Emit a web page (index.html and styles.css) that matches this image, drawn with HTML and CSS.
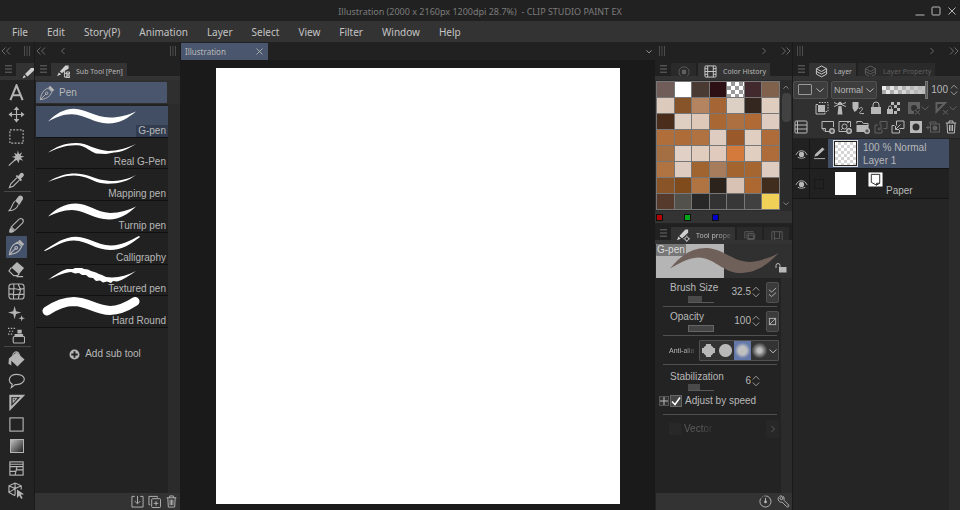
FILE: index.html
```
<!DOCTYPE html>
<html lang="en">
<head>
<meta charset="utf-8">
<title>Illustration - CLIP STUDIO PAINT EX</title>
<link rel="stylesheet" href="styles.css">
</head>
<body>
<svg class="sprite" aria-hidden="true">
  <symbol id="dbl-left" viewBox="0 0 10 8"><path d="M4.500 .5 1 4l3.500 3.500M9 .5 5.500 4 9 7.500"/></symbol>
  <symbol id="dbl-right" viewBox="0 0 10 8"><path d="M1 .5 4.500 4 1 7.500M5.500 .5 9 4 5.500 7.500"/></symbol>
  <symbol id="left" viewBox="0 0 6 8"><path d="M4.500 1 1.500 4l3 3"/></symbol>
  <symbol id="right" viewBox="0 0 6 8"><path d="M1.500 1l3 3-3 3"/></symbol>
  <symbol id="down" viewBox="0 0 8 6"><path d="M.5 1.500 4 4.800 7.500 1.500"/></symbol>
  <symbol id="up" viewBox="0 0 8 6"><path d="M.5 4.500 4 1.200 7.500 4.500"/></symbol>
  <symbol id="spin" viewBox="0 0 8 12"><path d="M.8 4.500 4 1.200 7.200 4.500M.8 7.500 4 10.800 7.200 7.500"/></symbol>
  <symbol id="grip" viewBox="0 0 6 10"><path d="M.5 0v10M3 0v10M5.500 0v10"/></symbol>
  <symbol id="burger" viewBox="0 0 7 8"><path d="M0 .8h7M0 4h7M0 7.200h7"/></symbol>
  <symbol id="close" viewBox="0 0 8 8"><path d="M.6 .6l6.800 6.800M7.400 .6.6 7.400"/></symbol>
  <symbol id="nib" viewBox="0 0 18 18"><path d="M1.500 16.500C2 12 3.500 8.500 6 6l4-2.500 4.500 4.500L12 12c-2.500 2.500-6 4-10.500 4.500zM2 16l6-6"/><circle cx="8.700" cy="9.300" r="1.400"/><path class="fill" d="M10.500 3 12.500 .8 17.200 5.500 15 7.500z"/></symbol>
  <symbol id="plus-round" viewBox="0 0 12 12"><path class="fill" fill-rule="evenodd" d="M6 .5a5.500 5.500 0 1 0 0 11 5.500 5.500 0 0 0 0-11zM5 2.500h2V5h2.500v2H7v2.500H5V7H2.500V5H5z"/></symbol>
  <symbol id="trash" viewBox="0 0 12 14"><path d="M.8 3h10.400M4 3V1h4v2M2 3l.6 10h6.800L10 3M4.500 5v6M6 5v6M7.500 5v6"/></symbol>
  <symbol id="layers" viewBox="0 0 14 14"><path d="M7 1l5.500 3L7 7 1.500 4zM1.500 6.800 7 9.800l5.500-3M1.500 9.800l5.500 3 5.500-3M1.500 4v5.800M12.500 4v5.800"/></symbol>
  <symbol id="eye" viewBox="0 0 14 10"><path d="M1 6c2.500-6 9.500-6 12 0"/><circle class="fill" cx="7" cy="5.500" r="2.800"/><path d="M3 8.500c2 1.300 6 1.300 8 0"/></symbol>
</svg>

<header class="titlebar">
  <h1>Illustration (2000 x 2160px 1200dpi 28.7%)&nbsp; - CLIP STUDIO PAINT EX</h1>
  <div class="window-buttons">
    <button aria-label="Minimize"><svg viewBox="0 0 10 10"><path d="M.5 9h9"/></svg></button>
    <button aria-label="Maximize"><svg viewBox="0 0 10 10"><rect x="1" y="1" width="8" height="8" rx="1"/></svg></button>
    <button aria-label="Close"><svg viewBox="0 0 10 10"><path d="M1.500 1.500l7 7M8.500 1.500l-7 7"/></svg></button>
  </div>
</header>

<nav class="menubar">
  <button>File</button><button>Edit</button><button>Story(P)</button><button>Animation</button><button>Layer</button><button>Select</button><button>View</button><button>Filter</button><button>Window</button><button>Help</button>
</nav>

<div class="workspace">
  <aside class="dock tool-dock">
    <div class="strip"><svg class="ic w10"><use href="#dbl-left"/></svg><svg class="ic grip push"><use href="#grip"/></svg></div>
    <div class="tabs"><svg class="ic burger"><use href="#burger"/></svg><span class="tab active clip"><svg class="ic lit" viewBox="0 0 12 12"><path class="fill" d="M.5 11.500 2 8l2 2zM3 7l6-6h3v2.500L5.500 9.500z"/></svg></span></div>
    <div class="tools">
      <button aria-label="Text"><svg viewBox="0 0 18 18"><path class="thick" d="M2.500 17 9 1.500 15.500 17M4.500 12h9"/></svg></button>
      <button aria-label="Move"><svg viewBox="0 0 18 18"><path d="M9 3v12M3 9h12"/><path class="fill" d="M9 .5l3 3.700H6zM9 17.500l3-3.700H6zM.5 9l3.700-3v6zM17.500 9l-3.700-3v6z"/></svg></button>
      <button aria-label="Marquee"><svg viewBox="0 0 18 18"><rect x="2" y="2" width="14" height="14" stroke-dasharray="2 1.500"/></svg></button>
      <button aria-label="Auto select"><svg viewBox="0 0 18 18"><path d="M.8 16.500 9 9"/><path class="fill" d="M10.500 .5l1.200 4 3.300-2-1.700 3.500 4.200 1-4 1.300 2.500 3.200-3.700-1.500L11 14l-1.500-3.500L6 12l1.500-3.500L4 7.200l4-.9L6.500 2.800l3 1.700z"/></svg></button>
      <button aria-label="Eyedropper"><svg viewBox="0 0 18 18"><path d="M9.500 6 3 12.500l-1.500 4 4-1.500L12 8.500"/><path class="fill" d="M8 4.200l1.500-1 1.300 1L13 1.500c2-2 5 .8 3.300 3L13.800 7l1 1.500-1.300 1.300z"/></svg></button>
      <hr>
      <button aria-label="Brush"><svg viewBox="0 0 18 18"><path d="M7.500 6.500C4 9 5.500 12 1.200 16.500c4 0 8-.5 9.800-6.500"/><path class="fill" d="M7.500 6l3.500-4.500c2-2.300 6 0 4.700 3L12 10.500z"/></svg></button>
      <button aria-label="Marker"><svg viewBox="0 0 18 18"><path d="M3 11 11.500 2.500c3-2.300 6 .8 4 3.700L7 14.500M3.500 10.500l4 4"/><path class="fill" d="M3 11l4 4c-2 2-5 2-5.500 1.500S1 13 3 11z"/></svg></button>
      <button aria-label="Pen" class="selected"><svg><use href="#nib"/></svg></button>
      <button aria-label="Eraser"><svg viewBox="0 0 18 18"><path class="fill" d="M9.500 1 17 7.500 11.500 14 3.500 7z"/><path d="M3.500 7 1 10.500l5 5h4l2-2M9 16.500h7"/></svg></button>
      <button aria-label="Mesh"><svg viewBox="0 0 18 18"><rect x="1" y="1" width="16" height="16" rx="3"/><path d="M6 1c1 5-1 10 0 16M11 1c0 3 3 4 2 8-1 3-2 5-2 8M1 6c5 1 6-1 10 1l6-1M1 12c4-1 6 1 9 0l7 0"/></svg></button>
      <button aria-label="Decoration"><svg viewBox="0 0 18 18"><path class="fill" d="M7 1l1.500 5.500L14 8 8.500 9.500 7 15 5.500 9.500 0 8l5.500-1.500zM14.500 10.500l.8 2.700 2.700.8-2.700.8-.8 2.700-.8-2.700-2.700-.8 2.700-.8z"/></svg></button>
      <button aria-label="Airbrush"><svg viewBox="0 0 18 18"><path class="fill" d="M10 3h4.500v4H10zM7 7.500h9v2H7z"/><rect x="5.500" y="10" width="12" height="7" rx="1.500"/><path stroke-dasharray="1.500 1.500" d="M0 1.500h8M1 4.500h6M0 7.500h5"/></svg></button>
      <hr>
      <button aria-label="Fill"><svg viewBox="0 0 18 18"><path class="fill" d="M9 2.500l8.500 7.500-7.500 7.500L3.500 11.500v5L.5 14.500 1 9z"/><path d="M5 6.500C5 3 8 .5 11 3l1.500 3"/></svg></button>
      <button aria-label="Balloon"><svg viewBox="0 0 18 18"><path d="M4.500 13C-1.500 9 2 2.500 9 2.500S19 7 16 10.500c-2 2.500-5 3-8.500 2.800L3.500 16.500z"/></svg></button>
      <button aria-label="Ruler"><svg viewBox="0 0 18 18"><path class="thick" d="M2.500 2v13.500L15.500 2z"/><path d="M5.500 4.500v4l3.500-4z"/></svg></button>
      <button aria-label="Figure"><svg viewBox="0 0 18 18"><rect x="2" y="2" width="14" height="14"/></svg></button>
      <button aria-label="Gradient"><span class="gradient-icon"></span></button>
      <button aria-label="Frame"><svg viewBox="0 0 18 18"><rect x="2" y="2" width="14" height="14"/><path d="M2 7h14M2 4.500h14M9.500 7l-2 9M8.500 12H2M9 10.500h7"/></svg></button>
      <button aria-label="Operation"><svg viewBox="0 0 18 18"><path d="M7.500 1 14 4v4M7.500 1 1 4v7l6.500 3.500M1 4l6.500 3L14 4M7.500 7v7M1 11l6.500-4M7.500 1v6"/><path class="fill" d="M9.500 8l7.500 5-3.500.5 2 3.500-1.500 1-2-3.500-2.500 2.500z"/></svg></button>
    </div>
  </aside>

  <aside class="dock sub-dock">
    <div class="strip"><svg class="ic w10"><use href="#dbl-left"/></svg><svg class="ic w6 lead"><use href="#left"/></svg><svg class="ic grip push"><use href="#grip"/></svg></div>
    <div class="tabs"><svg class="ic burger"><use href="#burger"/></svg><span class="tab active"><svg class="ic lit big" viewBox="0 0 14 14"><path class="fill" d="M0 12l2-4 2.500 2zM3 7l6-6.500h3.500V4L8 6.500 5.500 9z"/><path d="M8 5v8h5M8 9h5M10 7.500h3.500v2.500H10zM10 11.500h3.500v2H10z"/></svg>Sub Tool [Pen]</span></div>
    <div class="sub-body">
      <div class="group-row"><button class="group"><svg><use href="#nib"/></svg>Pen</button></div>
      <div class="brush-list">
        <button class="brush selected"><svg viewBox="0 0 132 30"><path d="M12 15.500C20 8 27 3 38 2.800C50 3 58 11 74 11.500C84 11.500 92 9 100 5.500C92 12 84 17.500 72 17.500C58 17.500 50 9 36 8.300C27 8 20 11.500 12 15.500z"/></svg><span>G-pen</span></button>
        <button class="brush"><svg viewBox="0 0 132 30"><path d="M12 14.500C20 9 28 5 40 5 52 5 58 12 72 13 82 13 91 10 100 6 92 11 86 14 78 14.500L70 16 60 15.500C54 13 50 9 44 7.500 32 6 22 10 12 14.500z"/></svg><span>Real G-Pen</span></button>
        <button class="brush"><svg viewBox="0 0 132 30"><path d="M12 13C22 7 30 4.500 40 4.600 54 5 58 11 74 12 84 12 92 10 100 6 92 12 84 14.700 72 14.700 58 15 54 7 38 6.500 28 6.500 20 10 12 13z"/></svg><span>Mapping pen</span></button>
        <button class="brush"><svg viewBox="0 0 132 30"><path d="M12 15.500C20 8 28 2.500 40 2.500 53 3 60 11 74 12 84 12 93 9 100 5.500 92 13 84 18.500 73 18.500 58 18.500 48 9 36 9 27 9 20 12 12 15.500z"/></svg><span>Turnip pen</span></button>
        <button class="brush"><svg viewBox="0 0 132 30"><path d="M8 17.500C20 10 28 4 40 3.800 53 4 60 12 75 12.500 86 12.500 95 7 103 3L104 4C95 11 86 17 74 17 60 17 52 8 38 7.500 27 7.500 18 14 9 18z"/></svg><span>Calligraphy</span></button>
        <button class="brush"><svg viewBox="0 0 132 30"><path d="M12 15C18 10 25 6 31 4L37 4 39 3 46 3 48 4 52 4.500 55 6 60 7.500 63 9 66 10 70 12 76 12.500C84 12.500 92 10 100 6 93 11 87 15 81 16.500L77 16 75 18 71 16.500 67 17.500 64 15.500 60 16 57 13 53 12.500 50 10 46 10 43 8 39 8.500 35 7C26 8 18 12 12 15z"/></svg><span>Textured pen</span></button>
        <button class="brush"><svg viewBox="0 0 132 30"><path class="round" d="M11 15C20 9 30 5.500 38 5.500 52 6 60 14 74 14.500 84 14.500 92 10 99 5.500"/></svg><span>Hard Round</span></button>
      </div>
      <button class="add"><svg><use href="#plus-round"/></svg>Add sub tool</button>
    </div>
    <footer class="foot">
      <button aria-label="Import"><svg viewBox="0 0 14 14"><path d="M4 1.500H1v11.500h12V1.500h-3M7 1v8M4 6.500l3 3 3-3"/></svg></button>
      <button aria-label="Duplicate"><svg viewBox="0 0 14 14"><rect x="4" y="4" width="9.500" height="9.500" rx="1"/><path d="M2.500 10.500H1v-9h9V3M8.700 6.500v5M6.200 9h5"/></svg></button>
      <button aria-label="Delete"><svg><use href="#trash"/></svg></button>
    </footer>
  </aside>

  <main class="document">
    <div class="doc-tabs"><button class="doc-tab">Illustration<svg><use href="#close"/></svg></button><svg class="ic doc-more"><use href="#down"/></svg></div>
    <div class="stage"><div class="paper"></div></div>
  </main>

  <aside class="dock prop-dock">
    <div class="strip"><svg class="ic grip"><use href="#grip"/></svg><svg class="ic w6 push"><use href="#right"/></svg><svg class="ic w10 wide-gap"><use href="#dbl-right"/></svg></div>
    <div class="tabs"><svg class="ic burger"><use href="#burger"/></svg><span class="tab dim icon-only"><svg class="ic" viewBox="0 0 14 14"><circle cx="7" cy="7" r="6"/><rect class="fill" x="4.500" y="4.500" width="5" height="5" rx="1"/></svg></span><span class="tab active"><svg class="ic lit big" viewBox="0 0 14 14"><rect x="1" y="1" width="12" height="12" rx="1"/><path d="M4 1v12M10 1v12M4 7h6M1 4h3M1 7h3M1 10h3M10 4h3M10 7h3M10 10h3"/></svg>Color History</span></div>
    <div class="history">
      <div class="swatches" id="swatches"></div>
      <div class="scroll"><svg class="ic"><use href="#up"/></svg><i></i><svg class="ic"><use href="#down"/></svg></div>
    </div>
    <div class="marks"><i class="red"></i><i class="green"></i><i class="blue"></i></div>

    <div class="tabs prop-tabs"><svg class="ic burger"><use href="#burger"/></svg><span class="tab active"><svg class="ic lit big" viewBox="0 0 14 14"><path class="fill" d="M0 12l1.500-4 2.500 2.500zM2.500 7.500 9 .5h3V4L5.500 10z"/><circle cx="10.500" cy="10.500" r="2"/><path d="M10.500 7v1M10.500 13v1M7 10.500h1M13 10.500h1"/></svg><span class="fade">Tool prope</span></span><span class="tab dim icon-only"><svg class="ic" viewBox="0 0 14 12"><rect x="3.500" y="3" width="9" height="7" rx="1"/><rect x="5" y="5" width="6" height="4"/><path d="M1 9V1h10"/></svg></span><span class="tab dim icon-only"><svg class="ic" viewBox="0 0 14 12"><path d="M1 11V1h12v10M4 1v10M10 1v8H4"/></svg></span></div>
    <div class="preview"><span>G-pen</span>
      <svg class="wave" viewBox="0 0 135 34" preserveAspectRatio="none"><path d="M14 24.500C24 12 35 4 50 4 68 5 76 18 94 18 105 17 114 13 122 9 110 21 100 29 82 29 66 28 58 14 42 13.500 31 14 22 20 14 24.500z"/></svg>
      <svg class="lock" viewBox="0 0 12 11"><rect class="fill" x="4" y="5" width="7.500" height="5.500"/><path d="M5 5V3.500a2 2 0 0 0-4 0V6"/></svg>
    </div>
    <div class="props">
      <div class="prop"><label for="size">Brush Size</label><input id="size" class="range f14" type="range"><input class="num" aria-label="Brush size value" value="32.5"><svg class="ic spin"><use href="#spin"/></svg><button class="dyn" aria-label="Size dynamics"><svg viewBox="0 0 10 12"><path d="M1 3l3 2.500L9 1M1 8l3 2.500L9 6"/></svg></button></div>
      <div class="prop"><label for="opacity">Opacity</label><input id="opacity" class="range f26" type="range"><input class="num" aria-label="Opacity value" value="100"><svg class="ic spin"><use href="#spin"/></svg><button class="dyn" aria-label="Opacity dynamics"><svg viewBox="0 0 10 12"><rect x="1.500" y="2.500" width="7" height="7"/><path d="M1.500 9.500l7-7"/></svg></button></div>
      <div class="prop anti"><span class="fade narrow">Anti-alia</span><div class="aa"><input type="radio" name="aa" aria-label="None" class="aa0"><input type="radio" name="aa" aria-label="Weak" class="aa1"><input type="radio" name="aa" aria-label="Middle" class="aa2" checked><input type="radio" name="aa" aria-label="Strong" class="aa3"><svg class="ic"><use href="#down"/></svg></div></div>
      <div class="prop stab"><label for="stab">Stabilization</label><input id="stab" class="range f12" type="range"><input class="num" aria-label="Stabilization value" value="6"><svg class="ic spin"><use href="#spin"/></svg><div class="speed"><button class="expand" aria-label="Expand"><svg viewBox="0 0 8 8"><path d="M4 0v8M0 4h8"/></svg></button><label><input type="checkbox" checked><svg viewBox="0 0 10 10"><path d="M1 5.500l3 3L9 1.500"/></svg>Adjust by speed</label></div></div>
      <div class="vector"><label><input type="checkbox" disabled><span class="fade">Vector</span></label><button class="more" aria-label="Vector magnet options" disabled><svg class="ic w6"><use href="#right"/></svg></button></div>
    </div>
    <footer class="foot">
      <button aria-label="Reset"><svg viewBox="0 0 14 14"><path d="M7 1a6 6 0 1 1-5.500 3.500"/><path stroke-dasharray="1 1.500" d="M1.500 4.500A6 6 0 0 1 7 1"/><path d="M7 3v4"/><circle class="fill" cx="7" cy="7.500" r="1.500"/></svg></button>
      <button aria-label="Settings"><svg viewBox="0 0 14 14"><path d="M5.500 1.200C3 .2.800 2.500 1.300 5l.7 1.500c1 1.200 2 1.500 3.500 1.200l5 5c1.300 1 3-.8 2-2l-5-5C8 4 7.500 2 6.500 1.500L6 4.500 4.500 5 3 4z"/><path d="M10.800 11h.4"/></svg></button>
    </footer>
  </aside>

  <aside class="dock layer-dock">
    <div class="strip"><svg class="ic grip"><use href="#grip"/></svg><svg class="ic w6 push"><use href="#right"/></svg><svg class="ic w10 wide-gap"><use href="#dbl-right"/></svg></div>
    <div class="tabs"><svg class="ic burger"><use href="#burger"/></svg><span class="tab active"><svg class="ic lit big"><use href="#layers"/></svg>Layer</span><span class="tab dim"><svg class="ic big"><use href="#layers"/></svg>Layer Property</span></div>
    <div class="layer-tools">
      <div class="blend">
        <button class="box" aria-label="Palette color"><i></i><svg class="ic caret"><use href="#down"/></svg></button>
        <div class="box mode"><select aria-label="Blend mode"><option>Normal</option></select><svg class="ic caret"><use href="#down"/></svg></div>
        <input class="alpha" type="range" aria-label="Layer opacity" value="100">
        <input class="num" aria-label="Layer opacity value" value="100"><svg class="ic spin"><use href="#spin"/></svg>
      </div>
      <div class="icons first">
        <button aria-label="Clip to layer below"><svg viewBox="0 0 14 14"><rect class="fill" x="3" y="4" width="7" height="7"/><path d="M3 3.500H1V13h9v-1.500"/><path stroke-dasharray="1.500 1.200" d="M4 1.500h9v9H10.500"/></svg></button>
        <button aria-label="Reference layer"><svg viewBox="0 0 14 14"><path class="fill" d="M5.500 5h3l1 8.500h-5zM5 2l2-1.500L9 2v2H5z"/><path d="M1 1.500l4 1.800M1 5.500l4-1.500M13 1.500 9 3.300M13 5.500 9 4"/></svg></button>
        <button aria-label="Draft layer"><svg viewBox="0 0 14 14"><path class="fill" d="M1.500 1h6v6L5.500 9.500 3.500 11 1.500 7z"/><path d="M8 8c2-3 5-1 2.500 1.500-2 2-4 3.500 2.500 3"/></svg></button>
        <button aria-label="Lock layer"><svg viewBox="0 0 14 14"><rect class="fill" x="2" y="6" width="10" height="7"/><path d="M4 6V4a3 3 0 0 1 6 0v2"/></svg></button>
        <button aria-label="Lock transparent pixels"><svg viewBox="0 0 14 14"><path class="fill" d="M4 1h3v3H4zM10 1h3v3h-3zM7 4h3v3H7zM10 7h3v3h-3zM7 10h3v3H7zM0 8h6v5H0z"/><path d="M1.500 8V6.500a1.500 1.500 0 0 1 3 0V8"/></svg></button>
        <button aria-label="Mask" class="off caretted"><svg viewBox="0 0 14 14"><path class="fill" fill-rule="evenodd" d="M1 1h12v7h-4l-2 2v3H1zM7 4a3 3 0 1 0 0 6 3 3 0 0 0 0-6z"/><path d="M8 9l5 4.500M13 9l-5 4.500"/></svg><svg class="caret"><use href="#down"/></svg></button>
        <button aria-label="Ruler range" class="off caretted"><svg viewBox="0 0 14 14"><path class="thick" d="M1.500 2v8.500L10 2z"/><path d="M8 9l5 4.500M13 9l-5 4.500"/></svg><svg class="caret"><use href="#down"/></svg></button>
      </div>
      <div class="icons second">
        <button aria-label="Panel layout"><svg viewBox="0 0 14 14"><rect x="1" y="1" width="12" height="12" rx="1"/><path d="M1 5h12M1 9h12M3.500 1v12"/></svg></button>
        <button aria-label="New raster layer"><svg viewBox="0 0 14 14"><path d="M8 11.500H4L1 8.500V1.500h11.500V7M4.500 11.500V8.500H1"/><circle class="fill" cx="11" cy="11" r="3"/><path class="cut" d="M11 9.300v3.400M9.300 11h3.400"/></svg></button>
        <button aria-label="New vector layer"><svg viewBox="0 0 14 14"><path d="M8 11.500H1V1.500h11.500V7"/><circle cx="6.500" cy="6.500" r="2.500"/><path d="M3 10l2-2M9 3l2-1"/><circle class="fill" cx="11" cy="11" r="3"/><path class="cut" d="M11 9.300v3.400M9.300 11h3.400"/></svg></button>
        <button aria-label="New folder"><svg viewBox="0 0 14 14"><path d="M.8 3.500V1.500h5l1.500 2H12V6"/><path class="fill" d="M.5 5h12v5L9 12H.5z"/><circle class="fill" cx="11" cy="11" r="3"/><path class="cut" d="M11 9.300v3.400M9.300 11h3.400"/></svg></button>
        <button aria-label="Transfer down" class="off"><svg viewBox="0 0 14 14"><path d="M6 1.500h7v7H9.500M6 1.500v3M4 5H1v8h7V9.500M7 4v5H4M5.500 7.500 4 9l1.500 1.500"/></svg></button>
        <button aria-label="Merge down"><svg viewBox="0 0 14 14"><path d="M5.500 5.500v-4.500h7.500v7.500H8.500M3.500 5.500H1V13h7.500v-3M9.500 4.500 4.500 9.500M4.500 6v3.500H8"/></svg></button>
        <button aria-label="Create mask"><svg viewBox="0 0 14 14"><path class="fill" fill-rule="evenodd" d="M1 1h12v12H1zM7 3.500a3.500 3.500 0 1 0 0 7 3.500 3.500 0 0 0 0-7z"/></svg></button>
        <button aria-label="Apply mask" class="off"><svg viewBox="0 0 14 14"><path d="M4 4V2h6v2M0 7.500h4M2 5.500v4"/><rect x="4.500" y="4" width="9" height="8"/><circle class="fill" cx="9" cy="8" r="2.500"/></svg></button>
        <button aria-label="Delete layer"><svg><use href="#trash"/></svg></button>
      </div>
    </div>
    <div class="layers">
      <div class="layer"><button class="eye" aria-label="Toggle Layer 1"><svg><use href="#eye"/></svg></button><span class="state"><svg viewBox="0 0 14 14"><path class="fill" d="M1.500 10.500l1-3L10 .5l2.500 2L5 9.500z"/><path d="M1 12.500h12"/></svg></span><div class="info selected"><i class="thumb checker"></i><p>100 % Normal<br>Layer 1</p></div></div>
      <div class="layer"><button class="eye" aria-label="Toggle Paper"><svg><use href="#eye"/></svg></button><span class="state"><i></i></span><div class="info"><i class="thumb"></i><svg class="sheet" viewBox="0 0 16 16"><rect width="16" height="16"/><path d="M3.500 2.500h9v9.500H9v2L3.500 11zM9 14l3.500-2"/></svg><p class="name">Paper</p></div></div>
    </div>
  </aside>
</div>
<script src="script.js"></script>
</body>
</html>
```
FILE: styles.css
```
* { box-sizing: border-box; }
body { margin: 0; height: 100vh; min-height: 510px; display: flex; flex-direction: column; background: #1b1b1b; color: #b8b8b8; font: 10px/12px "Liberation Sans", sans-serif; overflow: hidden; }
button, input, select { font: inherit; color: inherit; background: none; border: 0; padding: 0; margin: 0; }
button { display: flex; align-items: center; justify-content: center; }
svg { fill: none; stroke: currentColor; stroke-width: 1; flex: none; display: block; }
.sprite { position: absolute; width: 0; height: 0; }
.fill { fill: currentColor; stroke: none; }
.thick { stroke-width: 2; }
.cut { stroke: #333; }
i { display: block; }
p { margin: 0; }

.titlebar { height: 21px; background: #212121; display: grid; grid-template-columns: 1fr auto 1fr; align-items: center; }
.titlebar h1 { grid-column: 2; margin: 2px 0 0; font: 9px/12px "Noto Sans", sans-serif; color: #7c7c7c; white-space: nowrap; }
.window-buttons { display: flex; gap: 6px; justify-content: flex-end; padding-right: 3px; }
.window-buttons svg { width: 10px; height: 10px; }
.menubar { height: 21px; background: #333; display: flex; align-items: center; gap: 18px; padding-left: 12px; font: 10px/14px "Noto Sans", sans-serif; color: #c4c4c4; }
.menubar { gap: 19px; }

.workspace { flex: 1; min-height: 0; display: flex; }
.dock { flex: none; display: flex; flex-direction: column; background: #232323; border-right: 1px solid #1a1a1a; }
.tool-dock { width: 35px; }
.sub-dock { width: 146px; }
.prop-dock { width: 138px; }
.layer-dock { width: 167px; border-right: 0; }
.document { flex: 1; min-width: 0; display: flex; flex-direction: column; }

.strip { height: 18px; flex: none; display: flex; align-items: center; padding: 0 4px 0 1px; color: #6a6a6a; background: #212121; }
.ic { width: 8px; height: 6px; }
.w10 { width: 10px; height: 8px; }
.w6 { width: 6px; height: 8px; }
.lead { margin-left: 14px; }
.grip { width: 6px; height: 10px; color: #4c4c4c; }
.push { margin-left: auto; }
.wide-gap { margin-left: 14px; }
.prop-dock .strip, .layer-dock .strip { padding: 0 1px 0 4px; }

.tabs { height: 20px; flex: none; display: flex; align-items: stretch; gap: 2px; padding: 3px 0 0 4px; border-bottom: 4px solid #333; background: #212121; }
.burger { width: 7px; height: 8px; margin: 2px 2px 0 1px; color: #6a6a6a; }
.tab { display: flex; align-items: center; gap: 6px; padding: 4px 4px 0 6px; height: 13px; background: #2a2a2a; color: #606060; font: 7px/12px "Noto Sans", sans-serif; white-space: nowrap; }
.tab.active { background: #333; color: #b8b8b8; }
.tab.dim { overflow: hidden; }
.tab .ic { width: 12px; height: 12px; }
.tab .big { width: 13px; height: 13px; }
.icon-only { width: 25px; padding: 4px 0 0; justify-content: center; }
.clip { padding: 0 0 0 6px; height: 17px; flex: 1; overflow: hidden; }
.clip .ic { margin-top: 3px; }
.tab .lit { color: #cfcfcf; }

.tools { padding: 1px 6px 0; display: flex; flex-direction: column; color: #b4b4b4; }
.tools button { height: 22px; width: 21px; border-radius: 1px; }
.tools svg { width: 17px; height: 17px; stroke-width: 1.200; }
.tools .thick { stroke-width: 2.200; }
.tools hr { width: 27px; height: 1px; margin: 0 -2px; border: 0; background: #484848; }
.tools .selected { background: #44516a; }
.gradient-icon { width: 14px; height: 14px; border: 1px solid #b4b4b4; background: linear-gradient(135deg, #c0c0c0, #222); }

.sub-body { flex: 1; background: linear-gradient(to right, #232323 133px, #2b2b2b 133px); padding-left: 1px; }
.group-row { background: #2f2f2f; padding: 2px 0 1px; margin-bottom: 2px; }
.group { width: 131px; height: 21px; justify-content: flex-start; gap: 4px; padding-left: 3px; background: #4a566d; border-radius: 1px; }
.group svg { width: 16px; height: 16px; }
.brush-list { width: 132px; height: 222px; display: grid; grid-template-rows: repeat(7, 1fr); background: #212121; }
.brush { display: grid; grid-template: 1fr / 1fr; border-bottom: 1px solid #101010; }
.brush svg { grid-area: 1 / 1; width: 132px; height: 30px; align-self: start; fill: #fff; stroke: none; }
.brush .round { fill: none; stroke: #fff; stroke-width: 9; stroke-linecap: round; }
.brush span { grid-area: 1 / 1; place-self: end; padding: 0 2px; }
.brush.selected { background: #424e64; }
.brush.selected span { background: #323d50; }
.add { width: 138px; margin-top: 20px; gap: 5px; }
.add svg { width: 11px; height: 11px; }
.foot { height: 17px; flex: none; display: flex; justify-content: flex-end; gap: 4px; background: #333; padding-right: 2px; margin-top: auto; }
.foot svg { width: 13px; height: 13px; }

.doc-tabs { height: 18px; flex: none; display: flex; align-items: center; background: #212121; padding-right: 2px; }
.doc-tab { width: 87px; height: 17px; margin-top: 1px; justify-content: space-between; padding: 0 5px 0 4px; background: #4a566d; font: 8px/12px "Noto Sans", sans-serif; }
.doc-tab svg { width: 7px; height: 7px; }
.doc-more { width: 6px; height: 5px; margin-left: auto; margin-right: 1px; }
.stage { flex: 1; padding: 8px 35px 6px; background: #1a1a1a; display: flex; }
.paper { flex: 1; background: #fff; }

.history { display: flex; height: 131px; padding: 1px 0; background: #2b2b2b; }
.swatches { flex: 1; margin-left: 1px; display: grid; grid-template: repeat(8, 1fr) / repeat(7, 1fr); gap: 1px; padding: 1px; background: #777; }
.checker { background: #fff repeating-conic-gradient(#999 0 25%, #fff 0 50%) 0 0 / 8px 8px; }
.scroll { width: 12px; display: flex; flex-direction: column; align-items: center; padding: 4px 0; color: #999; }
.scroll .ic { width: 6px; height: 5px; }
.scroll i { width: 9px; height: 29px; margin: 3px 0 auto; border-radius: 4px; background: #424242; }
.marks { height: 12px; display: flex; gap: 21px; padding-left: 1px; align-items: center; background: #333; }
.marks i { width: 7px; height: 7px; border: 1px solid #111; }
.red { background: #b30000; }
.green { background: #00a818; }
.blue { background: #0000c8; }
.prop-tabs { margin-top: 1px; }
.fade { white-space: nowrap; -webkit-mask: linear-gradient(to right, #000 60%, #0004); mask: linear-gradient(to right, #000 60%, #0004); }
.preview { height: 34px; flex: none; margin-left: 1px; position: relative; background: linear-gradient(to right, #b5b5b5 68px, #303030 68px); }
.preview span { display: inline-block; background: #777; color: #ddd; padding: 0 1px; border-radius: 1px; }
.wave { position: absolute; inset: 0; width: 100%; height: 100%; fill: #70605a; stroke: none; }
.lock { position: absolute; right: 5px; bottom: 5px; width: 12px; height: 11px; }

.props { flex: 1; margin-left: 1px; padding: 0 15px 0 7px; background: linear-gradient(to left, #2b2b2b 11px, #232323 11px); }
.prop { display: grid; grid-template-columns: 18px 27px 1fr auto 10px 16px; grid-template-rows: 14px 8px; align-items: center; padding: 3px 0 3px 7px; border-bottom: 1px solid #505050; height: 29px; }
.prop > label { grid-area: 1 / 1 / 2 / 4; }
.prop > .range { grid-area: 2 / 2; }
.prop > .num { grid-area: 1 / 4 / 3 / 5; }
.prop > .spin { grid-area: 1 / 5 / 3 / 6; }
.dyn { grid-area: 1 / 6 / 3 / 7; justify-self: end; width: 13px; height: 21px; margin-right: -2px; background: #3b3b3b; border: 1px solid #505050; border-radius: 2px; }
.dyn svg { width: 9px; height: 11px; }
.num { width: 24px; height: 12px; text-align: right; }
.spin { width: 8px; height: 12px; margin-left: 1px; color: #999; }
.range { appearance: none; width: 26px; height: 7px; border-bottom: 1px solid #5a5a5a; }
.range::-webkit-slider-thumb { appearance: none; width: 1px; height: 1px; opacity: 0; }
.f14 { background: linear-gradient(to right, #4a4a4a 14px, transparent 14px); }
.f26 { background: #444; border: 1px solid #666; }
.f12 { background: linear-gradient(to right, #4a4a4a 12px, transparent 12px); }
.prop.anti { display: flex; justify-content: space-between; padding: 2px 0 1px 6px; }
.narrow { font-size: 7px; }
.aa { width: 80px; height: 21px; margin-right: -2px; display: flex; align-items: center; background: #333; border: 1px solid #505050; border-radius: 1px; }
.aa input { appearance: none; width: 17px; height: 19px; }
.aa input:checked { background-color: #6478aa; }
.aa0 { background: radial-gradient(circle, #b8b8b8 5px, transparent 6px), linear-gradient(#b8b8b8, #b8b8b8) center / 5px 13px no-repeat, linear-gradient(#b8b8b8, #b8b8b8) center / 13px 5px no-repeat; }
.aa1 { background: radial-gradient(circle, #b8b8b8 6px, transparent 7px); }
.aa2 { background-image: radial-gradient(circle, #c0c0c0 4px, transparent 8px); }
.aa3 { background: radial-gradient(circle, #c0c0c0 2px, transparent 8px); }
.aa .ic { margin-left: 1px; }
.prop.stab { height: 50px; grid-template-rows: 14px 7px 20px; padding-top: 5px; }
.speed { grid-area: 3 / 1 / 4 / 7; display: flex; align-items: center; gap: 1px; margin-left: -11px; }
.speed label { display: flex; align-items: center; position: relative; gap: 3px; white-space: nowrap; }
.speed input { appearance: none; width: 12px; height: 12px; background: #444; border: 1px solid #666; }
.speed label svg { position: absolute; left: 1px; width: 10px; height: 10px; color: #fff; stroke-width: 1.500; }
.expand { width: 10px; height: 10px; background: #333; border: 1px solid #555; }
.expand svg { width: 8px; height: 8px; }
.vector { display: flex; justify-content: space-between; align-items: center; height: 27px; padding-left: 6px; color: #5c5c5c; }
.vector label { display: flex; align-items: center; gap: 3px; }
.vector input { appearance: none; width: 12px; height: 12px; background: #282828; }
.more { width: 13px; height: 18px; margin-right: -2px; background: #272727; }
.prop-dock .foot { gap: 5px; margin-left: 1px; }

.layer-tools { background: #303030; height: 58px; flex: none; }
.blend { display: flex; align-items: center; height: 19px; gap: 3px; padding-right: 2px; }
.box { height: 18px; display: flex; align-items: center; justify-content: space-between; background: #3d3d3d; border: 1px solid #505050; border-radius: 2px; }
button.box { width: 35px; padding: 0 3px 0 4px; }
.box i { width: 14px; height: 11px; border: 1px solid #999; border-radius: 1px; }
.mode { width: 46px; position: relative; }
.mode select { appearance: none; width: 100%; padding-left: 2px; font-size: 9px; }
.mode .caret { position: absolute; right: 2px; pointer-events: none; }
.alpha { appearance: none; flex: 1; min-width: 0; height: 8px; margin-left: 2px; background: linear-gradient(to right, #fff0, #bbb), repeating-conic-gradient(#aaa 0 25%, #eee 0 50%) 0 0 / 8px 8px; }
.alpha::-webkit-slider-thumb { appearance: none; width: 3px; height: 18px; background: #555; border: 1px solid #777; }
.blend .num { width: 17px; }
.blend .spin { margin-left: -1px; }
.icons { display: flex; align-items: center; height: 20px; }
.icons svg { width: 14px; height: 14px; }
.icons button { width: 14px; }
.first { gap: 4px; padding-left: 22px; height: 17px; }
.first .caretted { width: 22px; margin-left: 2px; justify-content: flex-start; }
.first .caret { width: 8px; height: 6px; }
.off { color: #606060; }
.second { justify-content: space-between; padding: 0 2px 0 1px; height: 21px; }
.second button:first-child { margin-right: 9px; }
.layers { background: #252525; flex: 1; border-right: 11px solid #2b2b2b; margin-top: 1px; }
.layer { display: flex; height: 30px; border-bottom: 1px solid #151515; background: #212121; }
.eye { width: 17px; border-right: 1px solid #151515; }
.eye svg { width: 13px; height: 10px; }
.state { width: 18px; display: flex; align-items: center; justify-content: center; }
.state svg { width: 13px; height: 13px; }
.state i { width: 10px; height: 10px; border: 1px solid #181818; }
.info { flex: 1; display: flex; align-items: center; gap: 6px; padding-left: 6px; }
.info.selected { background: #424e64; }
.info p { line-height: 13px; white-space: nowrap; }
.thumb { width: 23px; height: 25px; background-color: #fff; border: 1px solid #222; outline: 0 solid #ddd; }
.selected .thumb { outline-width: 1px; }
.thumb.checker { background: #fff repeating-conic-gradient(#d4d4d4 0 25%, #fff 0 50%) 0 0 / 6px 6px; }
.sheet { width: 15px; height: 15px; align-self: flex-start; margin: 3px 0 0 5px; fill: #fff; stroke: #222; }
.info .name { margin: 14px 0 0 -3px; }
```
FILE: script.js
```
const colors = `
705c58 ffffff 4a3a34 2c1014 checker 42292e 80624c
dccabd 875329 b4835f a66534 dcd0c5 34271f dfcdbf
4a2e1b dfcfc3 dec9b9 a96733 ad7040 b06a35 dfccc0
b06f3a ad6c38 b07241 dfccc0 99592b e0cec1 ad6c3a
a46f43 e0d0c5 e0cdbd dfcabd d37a3c e0cec1 ad6c3a
b07443 dfccc0 a06430 a67c5c a3642f a66632 dfccc0
885428 804b1c b07443 2c241c d7c2b3 ac6830 402d1e
563a2c 52514b 282828 333333 383838 404040 f0d057`.trim().split(/\s+/);
const box = document.getElementById("swatches");
for (const color of colors) {
  const cell = document.createElement("i");
  if (color === "checker") cell.className = "checker";
  else cell.style.background = "#" + color;
  box.append(cell);
}
```
